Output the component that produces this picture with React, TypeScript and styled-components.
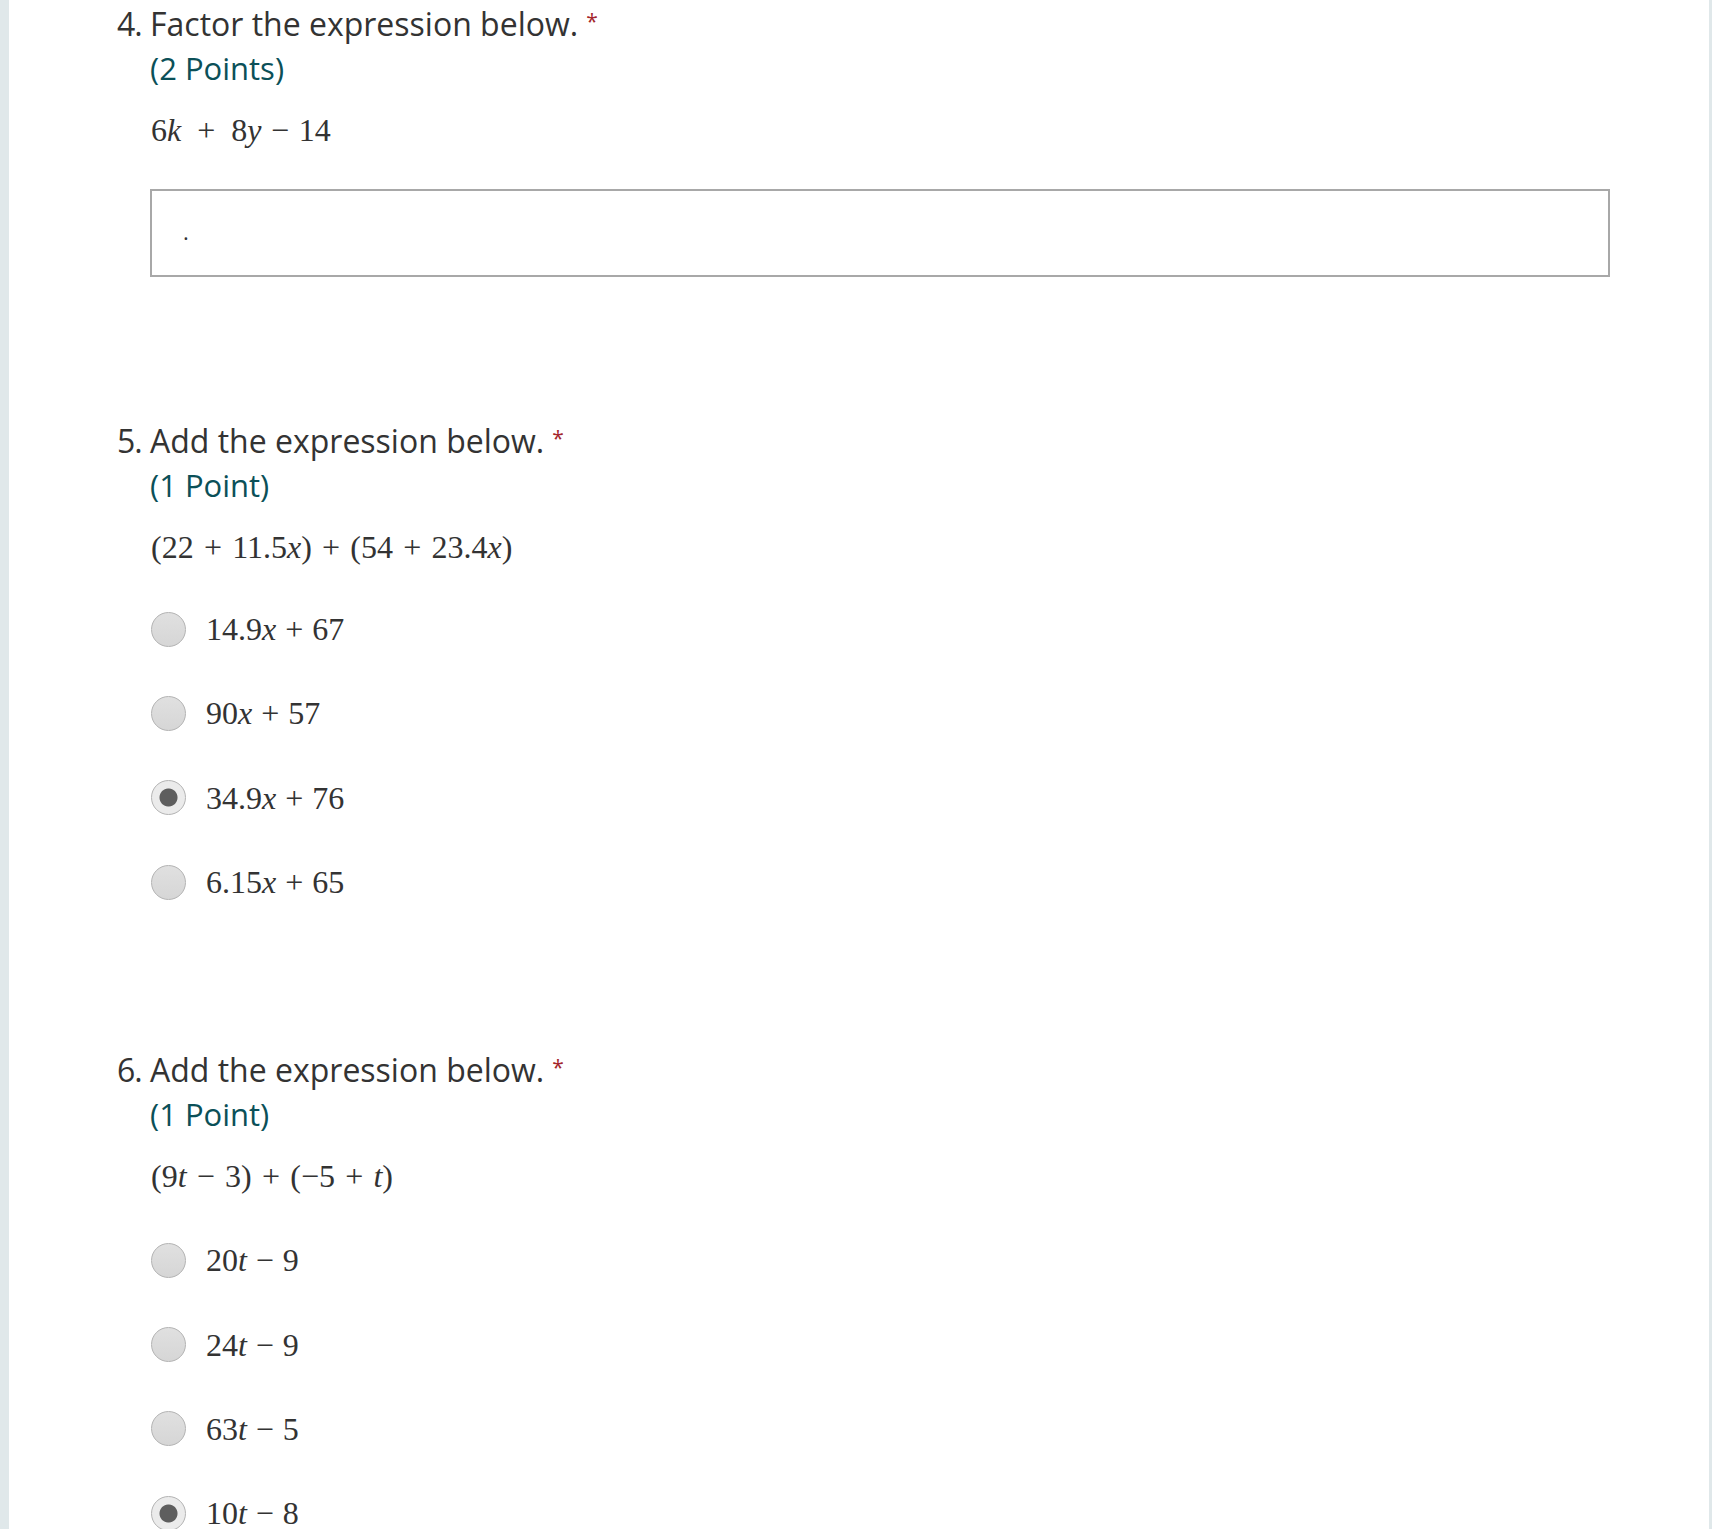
import React from 'react';
import styled, { createGlobalStyle } from 'styled-components';

const GlobalStyle = createGlobalStyle`
  html, body {
    margin: 0;
    padding: 0;
    background: #e0e8ea;
  }
  #root {
    min-height: 100vh;
  }
`;

const Page = styled.div`
  display: flex;
  min-height: 1529px;
  padding: 0 3px 0 9px;
  background: #e0e8ea;
`;

const Card = styled.main`
  flex: 1;
  background: #fff;
  padding: 4px 0 0 141px;
  display: flex;
  flex-direction: column;
  gap: 144px;
  overflow: hidden;
`;

const Question = styled.section`
  display: flex;
  flex-direction: column;
`;

const TitleRow = styled.div`
  position: relative;
  display: flex;
  align-items: baseline;
  font-family: 'Open Sans', 'Noto Sans', sans-serif;
  font-size: 32px;
  line-height: 40px;
  color: #333;
`;

const Num = styled.span`
  position: absolute;
  left: -33px;
  width: 33px;
  letter-spacing: -1px;
`;

const Required = styled.span`
  color: #a4262c;
  font-size: 21px;
  margin-left: 8px;
  align-self: flex-start;
  line-height: 34px;
`;

const Points = styled.div`
  margin-top: 6px;
  font-family: 'Open Sans', 'Noto Sans', sans-serif;
  font-size: 31px;
  line-height: 36px;
  color: #0b5058;
`;

const Expr = styled.div`
  font-family: 'Liberation Serif', 'Times New Roman', serif;
  font-size: 32px;
  line-height: 36px;
  color: #333;
  white-space: nowrap;
`;

const Formula = styled(Expr)`
  margin-top: 26px;
  margin-left: 1px;
`;

const V = styled.i`
  font-style: italic;
`;

const Op = styled.span<{ $sp?: number }>`
  margin: 0 ${(p) => p.$sp ?? 0.32}em;
`;

const AnswerBox = styled.input`
  margin-top: 41px;
  width: 1460px;
  height: 88px;
  box-sizing: border-box;
  border: 2px solid #a8a8a8;
  padding: 0 0 5px 31px;
  font-family: 'Open Sans', 'Noto Sans', sans-serif;
  font-size: 22px;
  color: #333;
  background: #fff;
  outline: none;
`;

const OptionList = styled.div<{ $top: number }>`
  margin-top: ${(p) => p.$top}px;
  padding-bottom: 6px;
  display: flex;
  flex-direction: column;
  gap: 48.4px;
`;

const OptionRow = styled.label`
  display: flex;
  align-items: center;
  gap: 20px;
  height: 36px;
  margin-left: 1px;
`;

const Radio = styled.span<{ $checked?: boolean }>`
  width: 35px;
  height: 35px;
  box-sizing: border-box;
  border-radius: 50%;
  border: 1px solid #b3b3b3;
  background: ${(p) =>
    p.$checked
      ? 'radial-gradient(circle, #5e5e5e 0 8.5px, #ebebeb 9.5px)'
      : 'linear-gradient(#e0e0e0, #d6d6d6)'};
  flex-shrink: 0;
`;

const OptionLabel = styled(Expr)`
  line-height: 36px;
`;

type Option = { label: React.ReactNode; checked?: boolean };

const Choice = ({ label, checked }: Option) => (
  <OptionRow>
    <Radio $checked={checked} />
    <OptionLabel>{label}</OptionLabel>
  </OptionRow>
);

const Title = ({ num, text }: { num: number; text: string }) => (
  <TitleRow>
    <Num>{num}.</Num>
    <span>{text}</span>
    <Required>*</Required>
  </TitleRow>
);

const q5Options: Option[] = [
  { label: <>14.9<V>x</V><Op $sp={0.28}>+</Op>67</> },
  { label: <>90<V>x</V><Op $sp={0.28}>+</Op>57</> },
  { label: <>34.9<V>x</V><Op $sp={0.28}>+</Op>76</>, checked: true },
  { label: <>6.15<V>x</V><Op $sp={0.28}>+</Op>65</> },
];

const q6Options: Option[] = [
  { label: <>20<V>t</V><Op $sp={0.28}>−</Op>9</> },
  { label: <>24<V>t</V><Op $sp={0.28}>−</Op>9</> },
  { label: <>63<V>t</V><Op $sp={0.28}>−</Op>5</> },
  { label: <>10<V>t</V><Op $sp={0.28}>−</Op>8</>, checked: true },
];

const App: React.FC = () => {
  return (
    <>
      <GlobalStyle />
      <Page>
        <Card>
          <Question>
            <Title num={4} text="Factor the expression below." />
            <Points>(2 Points)</Points>
            <Formula>
              6<V>k</V>
              <Op $sp={0.5}>+</Op>8<V>y</V>
              <Op $sp={0.3}>−</Op>14
            </Formula>
            <AnswerBox readOnly defaultValue="." />
          </Question>

          <Question>
            <Title num={5} text="Add the expression below." />
            <Points>(1 Point)</Points>
            <Formula>
              (22<Op>+</Op>11.5<V>x</V>)<Op>+</Op>(54<Op>+</Op>23.4<V>x</V>)
            </Formula>
            <OptionList $top={46}>
              {q5Options.map((o, i) => (
                <Choice key={i} {...o} />
              ))}
            </OptionList>
          </Question>

          <Question>
            <Title num={6} text="Add the expression below." />
            <Points>(1 Point)</Points>
            <Formula>
              (9<V>t</V>
              <Op>−</Op>3)<Op>+</Op>(−5<Op>+</Op>
              <V>t</V>)
            </Formula>
            <OptionList $top={48}>
              {q6Options.map((o, i) => (
                <Choice key={i} {...o} />
              ))}
            </OptionList>
          </Question>
        </Card>
      </Page>
    </>
  );
};

export default App;
